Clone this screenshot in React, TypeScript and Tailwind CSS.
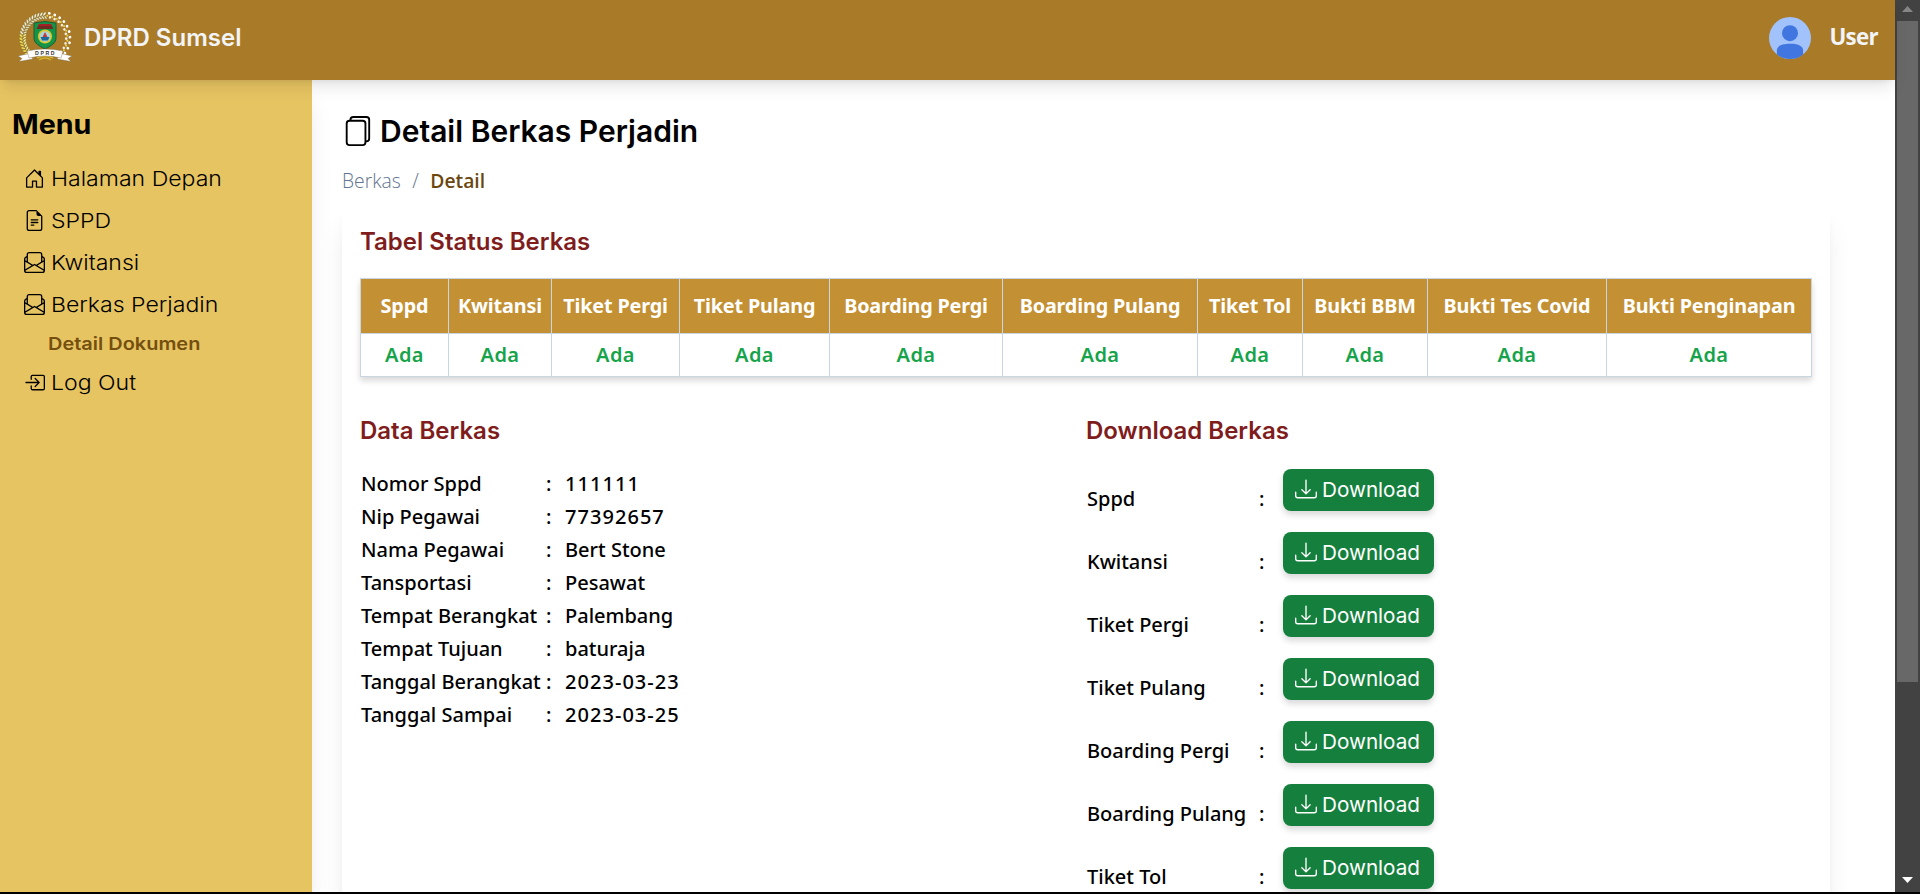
import React from "react";
import {
  BsHouseDoor,
  BsFileEarmarkText,
  BsEnvelopePaper,
  BsBoxArrowInRight,
  BsFiles,
  BsDownload,
} from "react-icons/bs";

const columns = [
  { name: "Sppd", width: "w-[88px]" },
  { name: "Kwitansi", width: "w-[103px]" },
  { name: "Tiket Pergi", width: "w-[128px]" },
  { name: "Tiket Pulang", width: "w-[150px]" },
  { name: "Boarding Pergi", width: "w-[173px]" },
  { name: "Boarding Pulang", width: "w-[195px]" },
  { name: "Tiket Tol", width: "w-[105px]" },
  { name: "Bukti BBM", width: "w-[125px]" },
  { name: "Bukti Tes Covid", width: "w-[179px]" },
  { name: "Bukti Penginapan", width: "w-[205px]" },
];

const details = [
  ["Nomor Sppd", "111111"],
  ["Nip Pegawai", "77392657"],
  ["Nama Pegawai", "Bert Stone"],
  ["Tansportasi", "Pesawat"],
  ["Tempat Berangkat", "Palembang"],
  ["Tempat Tujuan", "baturaja"],
  ["Tanggal Berangkat", "2023-03-23"],
  ["Tanggal Sampai", "2023-03-25"],
];

const downloads = [
  "Sppd",
  "Kwitansi",
  "Tiket Pergi",
  "Tiket Pulang",
  "Boarding Pergi",
  "Boarding Pulang",
  "Tiket Tol",
];

function Crest() {
  const left = Array.from({ length: 19 }, (_, i) => 228 - i * 7.6);
  const right = Array.from({ length: 10 }, (_, i) => 80 - i * 13);
  const at = (deg: number, r: number) => {
    const a = (deg * Math.PI) / 180;
    return [28 + r * Math.cos(a), 26 - r * Math.sin(a)];
  };
  return (
    <svg viewBox="0 0 56 50" className="h-[50px] w-14 shrink-0">
      {left.map((d, i) => {
        const [x, y] = at(d, 24);
        const [x2, y2] = at(d - 3, 20.5);
        return (
          <g key={i}>
            <ellipse cx={x} cy={y} rx="2.3" ry="1.1" transform={`rotate(${-d + 35} ${x} ${y})`} fill={i < 8 ? "#f3e35a" : "#f4f0d4"} stroke="#6b5a22" strokeWidth="0.35" />
            <ellipse cx={x2} cy={y2} rx="2.1" ry="1" transform={`rotate(${-d - 35} ${x2} ${y2})`} fill={i < 8 ? "#f7f09a" : "#e9e4c0"} stroke="#6b5a22" strokeWidth="0.35" />
          </g>
        );
      })}
      {right.map((d, i) => {
        const [x, y] = at(d, 23);
        return (
          <g key={i} transform={`rotate(${-d} ${x} ${y})`}>
            <circle cx={x + 2} cy={y} r="1.4" fill="#fff" />
            <circle cx={x - 1.8} cy={y + 1.4} r="1.3" fill="#f2efe2" />
            <circle cx={x - 0.6} cy={y - 1.6} r="1" fill="#e5d24c" />
          </g>
        );
      })}
      <path d="M17 11 L28 9.5 L39 11 V26 C39 31 34 34 28 37 C22 34 17 31 17 26 Z" fill="#159447" stroke="#1d5c35" strokeWidth="1" />
      <path d="M19.5 17 L22 12 H34 L36.5 17 Z" fill="#6f2a22" />
      <path d="M21.5 13 H34.5" stroke="#b3202a" strokeWidth="1.6" />
      <circle cx="28" cy="24.5" r="7" fill="#d9c935" />
      <circle cx="28" cy="24.5" r="5.3" fill="#a9d5e0" />
      <path d="M23.5 25 H32.5 L31 28.5 H25 Z" fill="#1d6a9a" />
      <path d="M28 20 L30.5 25 H25.5 Z" fill="#c33b35" />
      <path d="M20 46 Q28 42 36 46 M22 48 Q28 44 34 48" fill="none" stroke="#d6b32c" strokeWidth="1.4" />
      <path d="M1 44 L12 41.5 L16 47 L2 49.5 L5 46.5 Z M55 44 L44 41.5 L40 47 L54 49.5 L51 46.5 Z" fill="#fff" stroke="#77684a" strokeWidth="0.4" />
      <path d="M10 39 Q28 35 46 39 L44 46 Q28 42 12 46 Z" fill="#fff" stroke="#77684a" strokeWidth="0.4" />
      <text x="28.6" y="42.8" textAnchor="middle" fontSize="5.2" fontWeight="700" letterSpacing="1.6" fontFamily="Liberation Sans, sans-serif" fill="#333">
        DPRD
      </text>
    </svg>
  );
}

function MenuItem({ icon: Icon, label }: { icon: React.ComponentType<{ size?: number }>; label: string }) {
  return (
    <a className="flex h-[42px] items-center gap-[6px]">
      <Icon size={21} />
      <span className="origin-left scale-x-[1.125] pt-[2px] text-[20.5px] font-light">{label}</span>
    </a>
  );
}

export default function App() {
  return (
    <div className="flex h-[894px] w-[1920px] flex-col overflow-hidden bg-black font-['Inter',sans-serif] text-black">
      <div className="flex h-[892px] overflow-hidden bg-white">
        <div className="flex w-[1895px] flex-col">
          <header className="relative z-20 flex h-20 shrink-0 items-center justify-between bg-[#a97a28] pr-[17px] pl-[17px] shadow-lg">
            <div className="flex h-full items-center pb-[7px]">
              <Crest />
              <span className="ml-[11px] pt-[2px] text-2xl font-semibold text-gray-100">DPRD Sumsel</span>
            </div>
            <div className="flex items-center pb-1">
              <svg viewBox="0 0 42 42" className="h-[42px] w-[42px]">
                <circle cx="21" cy="21" r="21" fill="#a1c2fa" />
                <circle cx="21" cy="16.2" r="8" fill="#4175df" />
                <path d="M7.9 37.4 V33.5 C7.9 28.5 14 26.8 21 26.8 S34.1 28.5 34.1 33.5 V37.4 A21 21 0 0 1 7.9 37.4 Z" fill="#4175df" />
              </svg>
              <span className="ml-[18px] pb-[2px] font-['Open_Sans',sans-serif] text-[22.3px] leading-8 font-bold tracking-[-0.03em] text-gray-100">User</span>
            </div>
          </header>
          <div className="flex min-h-0 grow">
            <nav className="relative z-10 w-[312px] shrink-0 bg-[#e7c462] shadow-xl">
              <h2 className="mt-7 ml-[12px] origin-left scale-x-[1.08] text-[26.5px] leading-8 font-bold">Menu</h2>
              <div className="mt-[17.5px] ml-6">
                <MenuItem icon={BsHouseDoor} label="Halaman Depan" />
                <MenuItem icon={BsFileEarmarkText} label="SPPD" />
                <MenuItem icon={BsEnvelopePaper} label="Kwitansi" />
                <MenuItem icon={BsEnvelopePaper} label="Berkas Perjadin" />
                <a className="flex h-9 pl-6 text-[#744f10]">
                  <span className="origin-left scale-x-[1.14] pt-[5px] text-[17.5px] font-semibold">Detail Dokumen</span>
                </a>
                <MenuItem icon={BsBoxArrowInRight} label="Log Out" />
              </div>
            </nav>
            <main className="min-w-0 grow pt-[33px] pl-[30px]">
              <h1 className="flex h-9 items-center gap-[8px] text-[30px] font-semibold">
                <BsFiles size={30} />
                <span>Detail Berkas Perjadin</span>
              </h1>
              <div className="mt-[18px] flex h-7 items-center font-['Open_Sans',sans-serif] text-[19.3px]">
                <span className="font-light text-slate-500">Berkas</span>
                <span className="mx-[11.5px] font-light text-slate-500">/</span>
                <span className="font-semibold text-[#6b4710]">Detail</span>
              </div>
              <section className="mt-[10px] h-[1100px] w-[1488px] bg-white px-[18px] pt-5 font-['Noto_Sans',sans-serif] text-xl shadow-xl">
                <h3 className="h-8 pt-px font-['Inter',sans-serif] text-2xl leading-8 font-semibold text-[#7f1d1d]">Tabel Status Berkas</h3>
                <table className="mt-[21px] w-[1452px] table-fixed border-collapse border border-slate-300 shadow-[0_4px_6px_rgba(0,0,0,0.15)]">
                  <thead>
                    <tr className="h-[55px] bg-[#c39033] text-white">
                      {columns.map((c) => (
                        <th key={c.name} className={`border border-slate-300 p-0 text-[19.8px] font-bold tracking-[-0.008em] whitespace-nowrap ${c.width}`}>
                          {c.name}
                        </th>
                      ))}
                    </tr>
                  </thead>
                  <tbody>
                    <tr className="h-[43px] text-center font-semibold text-[#16a34a]">
                      {columns.map((c) => (
                        <td key={c.name} className="border border-slate-300 p-0 tracking-[0.02em]">Ada</td>
                      ))}
                    </tr>
                  </tbody>
                </table>
                <div className="mt-[38px] flex">
                  <div className="w-[726px]">
                    <h3 className="h-8 font-['Inter',sans-serif] text-2xl leading-8 font-semibold text-[#7f1d1d]">Data Berkas</h3>
                    <div className="mt-[20px] pl-[1px] font-medium">
                      {details.map(([label, value]) => (
                        <div key={label} className="flex h-[33px] items-center">
                          <span className="w-[185px] whitespace-nowrap">{label}</span>
                          <span className="w-[19px]">:</span>
                          <span className={/^\d/.test(value) ? "tracking-[0.052em]" : ""}>{value}</span>
                        </div>
                      ))}
                    </div>
                  </div>
                  <div>
                    <h3 className="h-8 font-['Inter',sans-serif] text-2xl leading-8 font-semibold text-[#7f1d1d]">Download Berkas</h3>
                    <div className="mt-[22px] pl-px font-medium">
                      {downloads.map((label) => (
                        <div key={label} className="flex h-[63px]">
                          <span className="w-[172px] pt-4">{label}</span>
                          <span className="w-6 pt-4">:</span>
                          <button className="flex h-[42px] w-[151px] items-center rounded-lg bg-[#15803d] pl-3 font-['Inter',sans-serif] text-[20.7px] font-normal text-white shadow-[0_4px_6px_rgba(0,0,0,0.15)]">
                            <BsDownload size={22} className="mb-[3px]" />
                            <span className="ml-[5px]">Download</span>
                          </button>
                        </div>
                      ))}
                    </div>
                  </div>
                </div>
              </section>
            </main>
          </div>
        </div>
        <div className="flex w-[25px] flex-col items-center bg-[#424242]">
          <svg viewBox="0 0 11 6" className="mt-[6px] h-[6px] w-[11px] shrink-0">
            <path d="M5.5 0 L11 6 H0 Z" fill="#868686" />
          </svg>
          <div className="mt-[9px] h-[661px] w-[21px] bg-[#686868]" />
          <svg viewBox="0 0 11 6" className="mt-auto mb-[9px] h-[6px] w-[11px] shrink-0">
            <path d="M0 0 H11 L5.5 6 Z" fill="#fff" />
          </svg>
        </div>
      </div>
    </div>
  );
}
